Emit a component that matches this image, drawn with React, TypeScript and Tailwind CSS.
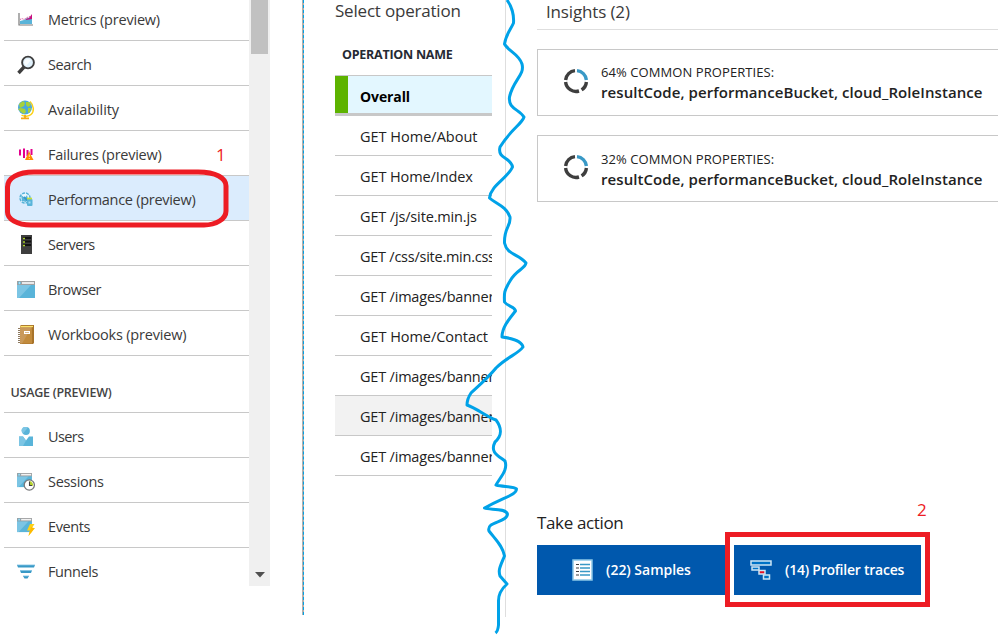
import React from "react";

const MetricsIcon = () => (
  <svg width="18" height="18" viewBox="0 0 18 18">
    <path d="M3 13V10l4-1 3-2 5-1v7z" fill="#59b4d9" />
    <path d="M9 8l3-1 3-4v5l-6 1z" fill="#c8107f" />
    <path d="M3 8.500l2-1 2 1 3-2 3-1" stroke="#e0569f" strokeDasharray="1.500 1" fill="none" />
    <path d="M2 2v12h14" stroke="#7a7a7a" strokeWidth="1.200" fill="none" />
  </svg>
);
const SearchIcon = () => (
  <svg width="18" height="20" viewBox="0 0 18 20">
    <path d="M7 12L1.500 18" stroke="#3e3e3e" strokeWidth="3.400" />
    <circle cx="11" cy="7.500" r="5.900" fill="#e1f1fb" stroke="#3e3e3e" strokeWidth="1.900" />
    <path d="M7 8a4 4 0 0 1 4-4l3 1-5 6z" fill="#f8fcfe" />
  </svg>
);
const GlobeIcon = () => (
  <svg width="18" height="20" viewBox="0 0 18 20">
    <path d="M13 1.500c4 4 4.500 10 1 13-2 2-7 2.500-9.500.5" fill="none" stroke="#fcd116" strokeWidth="1.500" />
    <path d="M8 15v3M4 18.300h8" stroke="#f5a915" strokeWidth="1.800" />
    <circle cx="8" cy="7.500" r="7" fill="#4aa8dc" />
    <path d="M2 4l4-3 2 2-1 3-4 2zM9 2l3 0 2 3-3 2-2-2zM4 8l4 1 1 3-2 2-3-2-3-3zM11 8l3 0-1 4-2 1z" fill="#a6d13c" />
  </svg>
);
const FailuresIcon = () => (
  <svg width="18" height="18" viewBox="0 0 18 18">
    <path d="M3 3.500v6M7 2.500v9.500M10.500 4v6M14.500 3v6" stroke="#e3008c" strokeWidth="2" />
    <path d="M12 5v4" stroke="#ec6ab0" strokeWidth="1" />
    <path d="M12 5.500L16.500 14h-8.500z" fill="#ff8c00" />
    <path d="M12.300 8.500v2.500M12.300 12v1" stroke="#ffe0a0" strokeWidth="1" />
  </svg>
);
const PerformanceIcon = () => (
  <svg width="18" height="18" viewBox="0 0 18 18">
    <circle cx="8" cy="7" r="5" fill="#e9f7ff" stroke="#59b4d9" strokeWidth="1.500" strokeDasharray="3 1" />
    <path d="M4 4l4 3 2-3 1 4-2 3-4-1z" fill="#59b4d9" />
    <path d="M7 6l4 4" stroke="#3999c6" strokeWidth="2" />
    <rect x="10" y="8" width="5.500" height="7" rx="1" fill="#59b4d9" />
    <path d="M10 7.500h5" stroke="#c6de3a" strokeWidth="1.700" />
    <path d="M11.500 10.500h2v2h-2z" fill="#a5dcf2" />
  </svg>
);
const ServersIcon = () => (
  <svg width="18" height="20" viewBox="0 0 18 20">
    <path d="M4 0h11v19H4z" fill="#3e3e3e" />
    <path d="M6 3h8M6 6.500h8M6 10h8" stroke="#111" strokeWidth="2" />
    <path d="M6 3.500h2M6 7h2M6 10.500h2" stroke="#a8cf28" strokeWidth="1.400" />
  </svg>
);
const Win = () => (
  <>
    <path d="M0 1h18v16H0z" fill="#59b4d9" />
    <path d="M0 4h14L2 17H0z" fill="#7cc5e4" />
    <path d="M0 0h18v4H0z" fill="#a0a1a2" />
    <path d="M5 2h12" stroke="#f2f2f2" strokeWidth="1.800" />
    <circle cx="2.500" cy="2" r="1.200" fill="#c4ecfb" stroke="#59b4d9" strokeWidth=".7" />
  </>
);
const BrowserIcon = () => (
  <svg width="18" height="17" viewBox="0 0 18 17"><Win /></svg>
);
const WorkbookIcon = () => (
  <svg width="18" height="20" viewBox="0 0 18 20">
    <path d="M3 1l1-1h13v18l-1 1H3z" fill="#a8732a" />
    <path d="M3 1.500h12V18.500H3z" fill="#c28b3c" />
    <path d="M3 1.500h12L5 18.500H3z" fill="#c9995a" />
    <path d="M3.500 1.500h12.500" stroke="#fce36a" strokeWidth="1.200" />
    <path d="M2 3v15" stroke="#8d7960" strokeWidth="2" strokeDasharray="1 1" />
    <path d="M7 6h6v3H7z" fill="#fff" /><path d="M8 7.500h4" stroke="#c28b3c" strokeWidth=".6" />
  </svg>
);
const UserIcon = () => (
  <svg width="18" height="20" viewBox="0 0 18 20">
    <path d="M2 9.500h4l3 4 3-4h4v9.500H2z" fill="#59b4d9" />
    <path d="M2 9.500h4l3 4-3 5.500H2z" fill="#7cc5e4" />
    <circle cx="9" cy="4" r="3.900" fill="#59b4d9" />
    <path d="M6 6.500a3.900 3.900 0 0 1 5-6z" fill="#7cc5e4" />
  </svg>
);
const SessionsIcon = () => (
  <svg width="18" height="18" viewBox="0 0 18 18">
    <g transform="scale(.83)"><Win /></g>
    <circle cx="12.300" cy="12" r="5.100" fill="#fff" stroke="#77787a" strokeWidth="1.300" />
    <path d="M12.500 12V8a4 4 0 0 1 3.500 5z" fill="#b8d432" />
    <path d="M12.500 8.500V12.500H15" stroke="#444" strokeWidth="1.100" fill="none" />
  </svg>
);
const EventsIcon = () => (
  <svg width="18" height="18" viewBox="0 0 18 18">
    <g transform="scale(.83)"><Win /></g>
    <path d="M13 6h4.500L15 10h3l-6.500 8 1.500-5.500h-3z" fill="#fcd116" />
    <path d="M14 9l3.500 1.200L11.500 18l1.500-5.500z" fill="#ffb900" />
  </svg>
);
const FunnelIcon = () => (
  <svg width="18" height="16" viewBox="0 0 18 16">
    <path d="M0 1h18l-1 2.500H1zM6 12h6l-1.500 2.500h-3z" fill="#3999c6" />
    <path d="M3 6.500h12l-1 2.500H4z" fill="#3999c6" />
    <path d="M0 1h18M3 6.500h12M6 12h6" stroke="#7dc1e3" strokeWidth=".8" />
  </svg>
);
const RingIcon = () => (
  <svg width="26" height="26" viewBox="0 0 26 26" fill="none" strokeWidth="3.400">
    <path d="M14 2.600A10.500 10.500 0 0 1 23.400 12" stroke="#3999c6" />
    <path d="M23.400 14A10.500 10.500 0 0 1 18.600 21.900M16 23A10.500 10.500 0 0 1 2.600 14M2.600 12A10.500 10.500 0 0 1 12 2.600" stroke="#3e3e3e" />
  </svg>
);

type Item = { icon: React.ReactNode; label: string; track: string; selected?: boolean };

const monitor: Item[] = [
  { icon: <MetricsIcon />, label: "Metrics (preview)", track: "tracking-[-0.2px]" },
  { icon: <SearchIcon />, label: "Search", track: "tracking-[-0.4px]" },
  { icon: <GlobeIcon />, label: "Availability", track: "tracking-[-0.1px]" },
  { icon: <FailuresIcon />, label: "Failures (preview)", track: "tracking-[-0.27px]" },
  { icon: <PerformanceIcon />, label: "Performance (preview)", track: "tracking-[-0.28px]", selected: true },
  { icon: <ServersIcon />, label: "Servers", track: "tracking-[-0.5px]" },
  { icon: <BrowserIcon />, label: "Browser", track: "tracking-[-0.45px]" },
  { icon: <WorkbookIcon />, label: "Workbooks (preview)", track: "tracking-[-0.2px]" },
];
const usage: Item[] = [
  { icon: <UserIcon />, label: "Users", track: "tracking-[-0.6px]" },
  { icon: <SessionsIcon />, label: "Sessions", track: "tracking-[-0.3px]" },
  { icon: <EventsIcon />, label: "Events", track: "tracking-[-0.4px]" },
  { icon: <FunnelIcon />, label: "Funnels", track: "tracking-[-0.4px]" },
];

const NavRow = ({ icon, label, track, selected }: Item) => (
  <li className={`flex h-[45px] shrink-0 items-center border-b border-[#c8c8c8] pl-3 ${selected ? "bg-[#dbecfd]" : ""}`}>
    <span className="flex w-5 justify-center pt-[3px]">{icon}</span>
    <span className={`ml-3 pt-1 text-[14.5px] leading-5 text-[#3a3a3a] ${track}`}>{label}</span>
  </li>
);

const operations = [
  { label: "GET Home/About", track: "tracking-[0px]" },
  { label: "GET Home/Index", track: "tracking-[-0.1px]" },
  { label: "GET /js/site.min.js", track: "tracking-[-0.15px]" },
  { label: "GET /css/site.min.css", track: "tracking-[-0.25px]" },
  { label: "GET /images/banner", track: "tracking-[-0.2px]" },
  { label: "GET Home/Contact", track: "tracking-[-0.05px]" },
  { label: "GET /images/banner", track: "tracking-[-0.2px]" },
  { label: "GET /images/banner", track: "tracking-[-0.2px]", hover: true },
  { label: "GET /images/banner", track: "tracking-[-0.2px]" },
];

const Insight = ({ percent, pad }: { percent: string; pad: string }) => (
  <article className="flex h-[67px] border border-r-0 border-[#c8c8c8] pl-[24.5px] text-black">
    <span className="pt-[18px]"><RingIcon /></span>
    <div className={`ml-[12.5px] whitespace-nowrap ${pad}`}>
      <p className="text-[13px] leading-5 tracking-[0.08px] text-[#222]">{percent} COMMON PROPERTIES:</p>
      <p className="text-[15px] font-semibold leading-5 tracking-[0.07px] text-[#222]">resultCode, performanceBucket, cloud_RoleInstance</p>
    </div>
  </article>
);

export default function App() {
  return (
    <main className="relative flex h-[636px] w-[998px] overflow-hidden bg-white font-['Open_Sans','Noto_Sans',sans-serif]">
      <nav className="ml-1 h-[586px] w-[245px] overflow-hidden">
        <ul className="-mt-1 flex flex-col">{monitor.map((i) => <NavRow key={i.label} {...i} />)}</ul>
        <h2 className="flex h-[57px] items-center border-b border-[#c8c8c8] pl-[6.5px] pt-[19px] text-[12.5px] font-semibold tracking-[-0.25px] text-[#444]">USAGE (PREVIEW)</h2>
        <ul className="flex flex-col">{usage.map((i) => <NavRow key={i.label} {...i} />)}</ul>
      </nav>
      <div className="flex h-[586px] w-[21px] flex-col items-center justify-between bg-[#f0f0f0]">
        <div className="mr-[1px] h-[54px] w-[17px] bg-[#c1c1c1]" />
        <svg className="mb-[8px]" width="10" height="6" viewBox="0 0 10 6"><path d="M0 0h10L5 5.500z" fill="#505050" /></svg>
      </div>
      <div className="ml-8 h-[615px] w-0.5 border-r border-dashed border-[#00a2e8] bg-[#b5b0ab]" />

      <section className="ml-[31px] w-[157px] overflow-hidden whitespace-nowrap">
        <h1 className="h-[22px] text-[17px] leading-[22px] tracking-[-0.2px] text-[#3a3a3a]">Select operation</h1>
        <h2 className="flex h-[54px] items-center border-b border-[#c8c8c8] pl-[7px] pt-[13px] text-[12.5px] font-bold tracking-[-0.25px] text-[#252a33]">OPERATION NAME</h2>
        <div className="flex h-10 items-center border-b-[3px] border-[#c8c8c8] bg-[#e3f7ff]">
          <span className="h-full w-[13px] bg-[#5db300]" />
          <b className="ml-3 pt-1 text-[14px] tracking-[-0.1px]">Overall</b>
        </div>
        {operations.map((o, n) => (
          <div key={n} className={`flex h-10 items-center border-b border-[#c8c8c8] pl-[25px] pt-0.5 text-[14.5px] text-[#222] ${o.track} ${o.hover ? "bg-[#f2f2f2]" : ""}`}>{o.label}</div>
        ))}
      </section>

      <div className="ml-[13px] h-[617px] w-px bg-[#dedede]" />

      <section className="ml-[31px] flex flex-1 flex-col">
        <h2 className="h-[30px] border-b border-[#dedede] pl-[9px] text-[17px] leading-6 tracking-[-0.15px] text-[#3a3a3a]">Insights (2)</h2>
        <div className="mt-[19px] flex flex-col gap-[19px]">
          <Insight percent="64%" pad="pt-3" />
          <Insight percent="32%" pad="pt-[13px]" />
        </div>
        <h2 className="mt-[309px] h-[34px] text-[17px] leading-6 tracking-[-0.35px] text-[#222]">Take action</h2>
        <div className="flex gap-[9px] text-[14px] font-semibold text-white">
          <button className="flex h-[50px] w-[188px] items-center bg-[#0058ad] pl-[35px]">
            <svg width="21" height="22" viewBox="0 0 21 22">
              <path d="M1 1h19v20H1z" fill="#fff" stroke="#8cc8e8" strokeWidth="1.500" />
              <path d="M4 5.500h3M4 9h3M4 12.500h3M4 16h3" stroke="#3e3e3e" strokeWidth="1.200" />
              <path d="M8 5.500h10M8 9h10M8 12.500h10M8 16h10" stroke="#3999c6" strokeWidth="1.500" />
            </svg>
            <span className="ml-[13px] pb-0.5 tracking-[-0.03px]">(22) Samples</span>
          </button>
          <button className="flex h-[50px] w-[187px] items-center bg-[#0058ad] pl-4">
            <svg width="22" height="20" viewBox="0 0 22 20" stroke="#cbe5f5" strokeWidth="1.500">
              <path d="M1 1h20v4H1z" fill="#0072c6" />
              <path d="M2 7h7v3H2zM13.500 15h6v4h-6z" fill="#0072c6" />
              <path d="M9 10.500h6v3.500H9z" fill="#e81123" />
            </svg>
            <span className="ml-[13px] pb-0.5 tracking-[-0.24px]">(14) Profiler traces</span>
          </button>
        </div>
      </section>

      <div className="pointer-events-none absolute left-[725px] top-[532px] h-[75px] w-[205px] border-[5px] border-[#ed1c24]" />
      <span className="absolute left-[216px] top-[143px] text-[17px] leading-6 text-[#ed1c24]">1</span>
      <span className="absolute left-[917px] top-[498px] text-[17px] leading-6 text-[#ed1c24]">2</span>
      <svg className="pointer-events-none absolute inset-0" width="998" height="636" fill="none">
        <path d="M34 172H198C216 172 226 178 226 186V211C226 219 216 225 204 225H31C17 225 7.500 219 7.500 212V187C7.500 178 18 172 34 172Z" stroke="#ed1c24" strokeWidth="5" />
        <path d="M507 0C512 7 514 16 513.500 23C511 29 506 34 504.500 44C508 51 519 54 522 64C525 75 513 80 509.500 97C508 109 519 109 524 117C522 124 511 129 500 147C497 159 511 157 512.500 167C508 178 491 185 489.500 198C496 204 506 206 510 217C511 227 504 227 504.500 243C507 255 519 254 526 263C525 269 516 270 510 281C504 291 504 293 504.500 302C508 307 515 306 515.500 311C510 318 502 327 502 337C510 338 522 341 523 347C518 354 507 357 496 368C487 379 474 390 471 393Q467 399 467 405C478 409 485 416 496 420C502 428 502 436 495 442C490 452 497 455 505 461C508 470 501 476 496 485C503 487 513 486 516.500 489C516 495 507 496 484.500 508C489 510 506 508 507.500 514C507 523 486 521 489 531C495 539 503 546 504.500 556C500 567 498 570 500 576L507 584Q498 592 498.500 602V625Q498 631 495.500 633" stroke="#00a2e8" strokeWidth="3" strokeLinejoin="round" />
      </svg>
    </main>
  );
}
